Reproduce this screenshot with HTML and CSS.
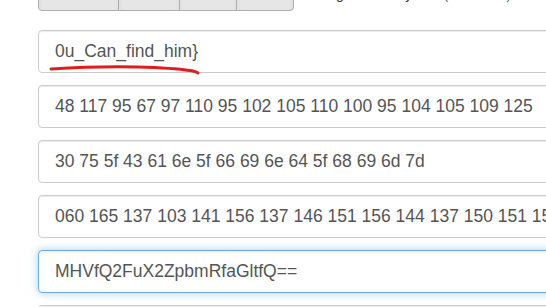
FILE: index.html
```html
<!DOCTYPE html>
<html lang="en">
<head>
    <meta charset="UTF-8">
    <meta name="viewport" content="width=device-width, initial-scale=1.0">
    <title>Decode</title>
    <link rel="stylesheet" href="styles.css">
</head>
<body>
    <div class="page">
        <div class="toolbar">
            <div class="btn-group">
                <button class="btn btn-wide" aria-label="Text"></button>
                <button class="btn btn-mid" aria-label="Dec"></button>
                <button class="btn" aria-label="Hex"></button>
                <button class="btn" aria-label="Oct"></button>
            </div>
            <p class="credit">Using base64 by Mrk <a href="#">(translator)</a></p>
        </div>

        <div class="field">
            <input class="form-control" type="text" value="0u_Can_find_him}" readonly>
            <!-- hand-drawn red underline -->
            <svg class="scribble" width="200" height="50" viewBox="0 0 200 50">
                <path d="M13 39 Q 60 36 100 37 Q 135 38 152 40.5 Q 158 41.5 160 43" fill="none" stroke="#e31b1b" stroke-width="3" stroke-linecap="round"/>
            </svg>
        </div>
        <div class="field">
            <input class="form-control" type="text" value="48 117 95 67 97 110 95 102 105 110 100 95 104 105 109 125" readonly>
        </div>
        <div class="field">
            <input class="form-control" type="text" value="30 75 5f 43 61 6e 5f 66 69 6e 64 5f 68 69 6d 7d" readonly>
        </div>
        <div class="field">
            <input class="form-control" type="text" value="060 165 137 103 141 156 137 146 151 156 144 137 150 151 155 175" readonly>
        </div>
        <div class="field">
            <input class="form-control is-focused" type="text" value="MHVfQ2FuX2ZpbmRfaGltfQ==" readonly>
        </div>
        <div class="field">
            <input class="form-control" type="text" value="" readonly>
        </div>
    </div>
</body>
</html>
```

FILE: styles.css
```css
body {
    margin: 0;
    font-family: 'Liberation Sans', Arial, sans-serif;
    color: #333;
    background: #fff;
    overflow: hidden;
}

.page {
    padding-left: 38px;
}

.toolbar {
    display: flex;
    align-items: flex-end;
    margin-top: -23px;
    margin-bottom: 19px;
}

.btn-group {
    display: flex;
}

.btn {
    height: 34px;
    width: 58px;
    margin: 0;
    margin-left: -1px;
    padding: 6px 12px;
    background: #e6e6e6;
    border: 1px solid #adadad;
    border-radius: 0;
    box-shadow: inset 0 3px 5px rgba(0, 0, 0, 0.06);
}

.btn:first-child {
    margin-left: 0;
    border-radius: 4px 0 0 4px;
}

.btn:last-child {
    border-radius: 0 4px 4px 0;
}

.btn-wide {
    width: 81px;
}

.btn-mid {
    width: 62px;
}

.credit {
    margin: 0 0 7px 14px;
    font-size: 14px;
    line-height: 20px;
    white-space: nowrap;
}

.credit a {
    color: #337ab7;
    text-decoration: none;
}

.field {
    position: relative;
    margin-bottom: 12px;
}

.form-control {
    display: block;
    box-sizing: border-box;
    width: 560px;
    height: 43px;
    margin: 0;
    padding: 0 16px;
    font-family: 'Liberation Sans', Arial, sans-serif;
    font-size: 17.5px;
    color: #555;
    background: #fff;
    border: 1px solid #ccc;
    border-radius: 4px;
    box-shadow: inset 0 1px 1px rgba(0, 0, 0, 0.075);
    outline: none;
}

.form-control.is-focused {
    border-color: #66afe9;
    box-shadow: inset 0 1px 1px rgba(0, 0, 0, 0.075), 0 0 8px rgba(102, 175, 233, 0.6);
}

.scribble {
    position: absolute;
    left: 0;
    top: 0;
    overflow: visible;
    pointer-events: none;
}
```
